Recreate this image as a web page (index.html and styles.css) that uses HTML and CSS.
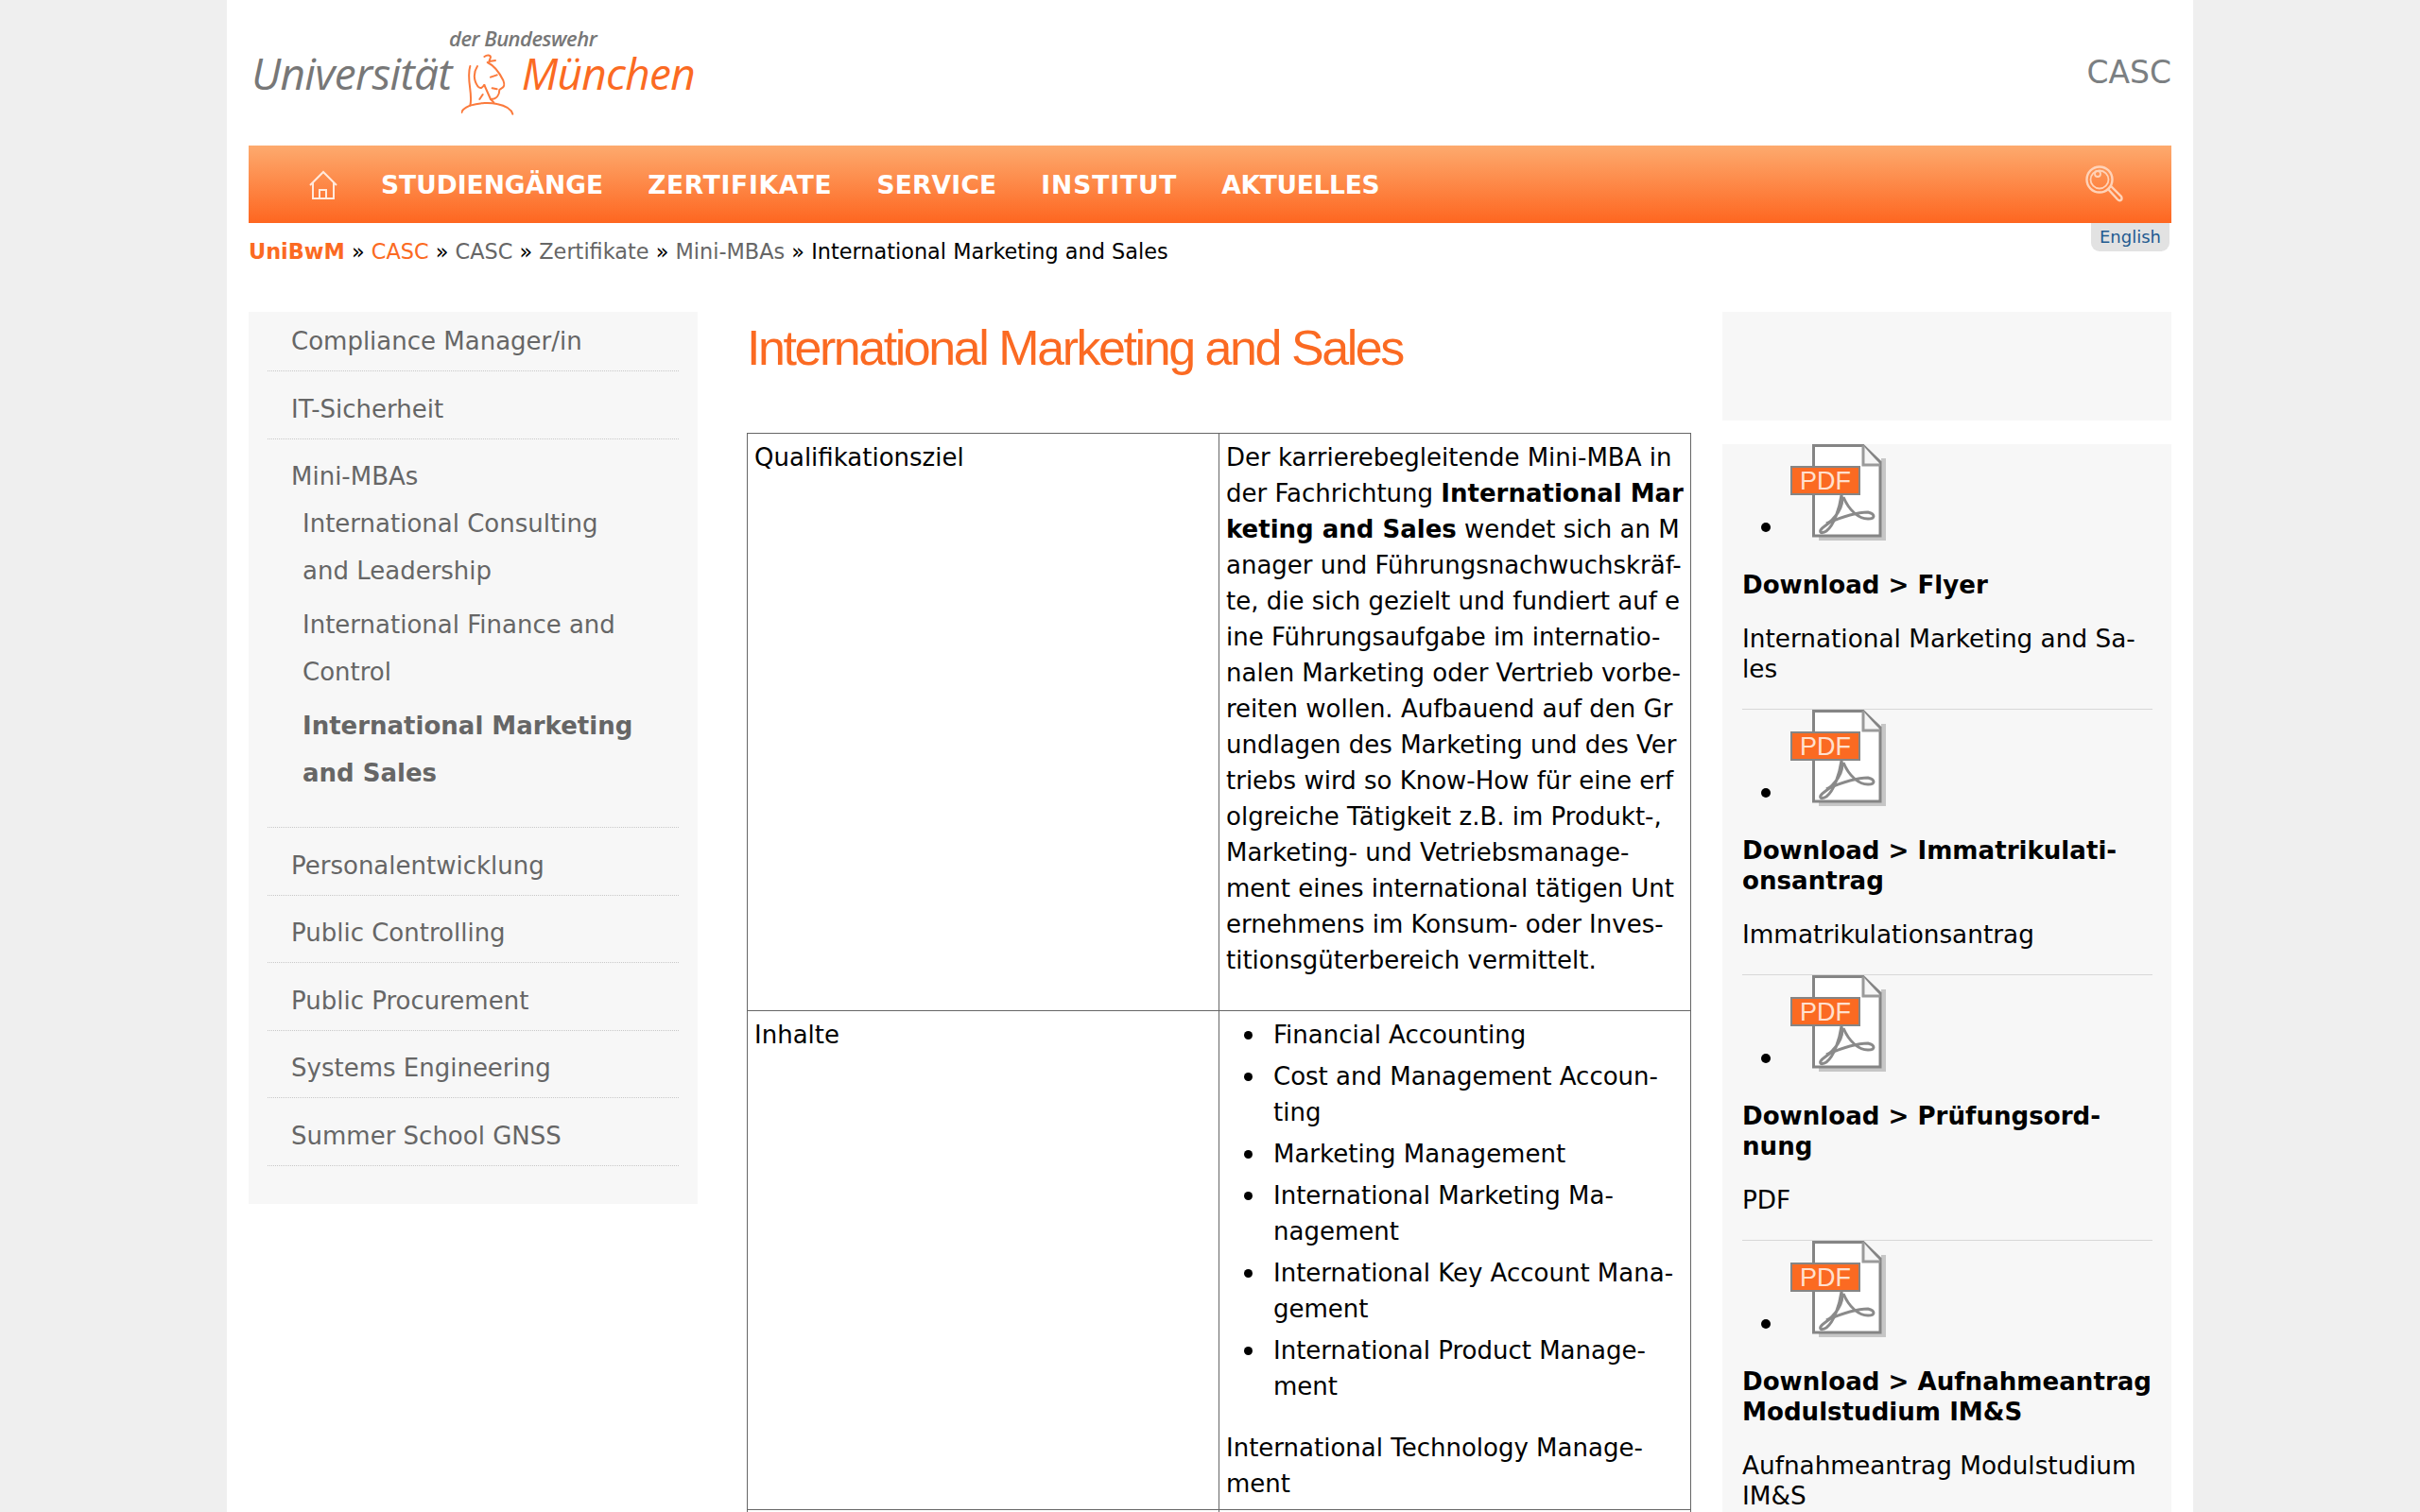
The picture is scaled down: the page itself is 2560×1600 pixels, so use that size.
FILE: index.html
```html
<!DOCTYPE html>
<html lang="de">
<head>
    <meta charset="UTF-8">
    <meta name="viewport" content="width=device-width, initial-scale=1.0">
    <title>International Marketing and Sales</title>
    <link rel="stylesheet" href="styles.css">
</head>
<body>
    <div class="page">
        <header class="header">
            <div class="logo">
                <div class="logo-top">der Bundeswehr</div>
                <div class="logo-main">
                    <span class="logo-uni">Universität</span>
                    <svg class="logo-head" viewBox="57 22 168 193" fill="none" stroke="#fb7a3c" stroke-width="6" stroke-linecap="round" stroke-linejoin="round">
                        <path d="M130 30C140 22 150 25 150 32L145 45L165 42"/>
                        <path d="M140 48C165 60 180 85 190 105C195 118 195 125 185 130L178 135C178 150 170 165 150 165"/>
                        <path d="M108 60C95 80 95 105 110 125C120 135 125 125 130 120"/>
                        <path d="M85 60C72 100 95 150 85 185C75 190 60 195 58 207"/>
                        <path d="M85 185C115 175 150 175 170 180C195 185 215 195 220 212"/>
                        <path d="M150 165L160 175M150 95L170 88M155 130L170 133M125 150L115 165M130 120L150 165"/>
                    </svg>
                    <span class="logo-city">München</span>
                </div>
            </div>
            <div class="site-name">CASC</div>
        </header>

        <nav class="navbar">
            <a class="nav-home" href="#">
                <svg viewBox="0 0 30 31" width="30" height="31" fill="none" stroke="#ffeadd" stroke-width="2">
                    <path d="M1 16 15 2l14 14M4 13v17h22V13M11 30v-9h7v9"/>
                </svg>
            </a>
            <a href="#">STUDIENGÄNGE</a>
            <a class="wide" href="#">ZERTIFIKATE</a>
            <a class="wide-s" href="#">SERVICE</a>
            <a class="wide-l" href="#">INSTITUT</a>
            <a class="tight" href="#">AKTUELLES</a>
            <svg class="nav-search" viewBox="0 0 40 40" width="40" height="40" fill="none" stroke="#ffd3b8" stroke-width="2.4">
                <circle cx="15" cy="15" r="13.5"/>
                <circle cx="15" cy="15" r="9.5" stroke-width="1.8"/>
                <circle cx="13" cy="9" r="3" stroke-width="1.8"/>
                <path d="M24 25 27 22 38 33Q39 35 38 36.500 36 38 34 36Z"/>
            </svg>
        </nav>

        <div class="crumb-row">
            <div class="crumbs">
                <a class="crumb-home" href="#">UniBwM</a> » <a class="crumb-casc" href="#">CASC</a> » <a href="#">CASC</a> » <a href="#">Zertifikate</a> » <a href="#">Mini-MBAs</a> » <span class="crumb-now">International Marketing and Sales</span>
            </div>
            <a class="lang" href="#">English</a>
        </div>

        <div class="columns">
            <aside class="sidenav">
                <ul class="menu">
                    <li><a href="#">Compliance Manager/in</a></li>
                    <li><a href="#">IT-Sicherheit</a></li>
                    <li>
                        <a href="#">Mini-MBAs</a>
                        <ul class="submenu">
                            <li><a href="#">International Consulting and Leadership</a></li>
                            <li><a href="#">International Finance and Control</a></li>
                            <li class="current"><a href="#">International Marketing and Sales</a></li>
                        </ul>
                    </li>
                    <li><a href="#">Personalentwicklung</a></li>
                    <li><a href="#">Public Controlling</a></li>
                    <li><a href="#">Public Procurement</a></li>
                    <li><a href="#">Systems Engineering</a></li>
                    <li><a href="#">Summer School GNSS</a></li>
                </ul>
            </aside>

            <main class="content">
                <h1>International Marketing and Sales</h1>
                <table class="info">
                    <tr class="row-goal">
                        <td>Qualifikationsziel</td>
                        <td>Der karrierebegleitende Mini-MBA in<br>der Fachrichtung <strong>International Mar<br>keting and Sales</strong> wendet sich an M<br>anager und Führungsnachwuchskräf-<br>te, die sich gezielt und fundiert auf e<br>ine Führungsaufgabe im internatio-<br>nalen Marketing oder Vertrieb vorbe-<br>reiten wollen. Aufbauend auf den Gr<br>undlagen des Marketing und des Ver<br>triebs wird so Know-How für eine erf<br>olgreiche Tätigkeit z.B. im Produkt-,<br>Marketing- und Vetriebsmanage-<br>ment eines international tätigen Unt<br>ernehmens im Konsum- oder Inves-<br>titionsgüterbereich vermittelt.</td>
                    </tr>
                    <tr>
                        <td>Inhalte</td>
                        <td>
                            <ul class="topics">
                                <li>Financial Accounting</li>
                                <li>Cost and Management Accoun-<br>ting</li>
                                <li>Marketing Management</li>
                                <li>International Marketing Ma-<br>nagement</li>
                                <li>International Key Account Mana-<br>gement</li>
                                <li>International Product Manage-<br>ment</li>
                            </ul>
                            <p class="topics-after">International Technology Manage-<br>ment</p>
                        </td>
                    </tr>
                    <tr class="row-next">
                        <td></td>
                        <td></td>
                    </tr>
                </table>
            </main>

            <aside class="sidebar">
                <div class="empty-box"></div>
                <ul class="downloads">
                    <li>
                        <div class="icon-row"><span class="bullet"></span><svg class="pdf" viewBox="0 0 102 102"><use href="#pdf-icon"/></svg></div>
                        <h4>Download &gt; Flyer</h4>
                        <p>International Marketing and Sa-<br>les</p>
                    </li>
                    <li>
                        <div class="icon-row"><span class="bullet"></span><svg class="pdf" viewBox="0 0 102 102"><use href="#pdf-icon"/></svg></div>
                        <h4>Download &gt; Immatrikulati-<br>onsantrag</h4>
                        <p>Immatrikulationsantrag</p>
                    </li>
                    <li>
                        <div class="icon-row"><span class="bullet"></span><svg class="pdf" viewBox="0 0 102 102"><use href="#pdf-icon"/></svg></div>
                        <h4>Download &gt; Prüfungsord-<br>nung</h4>
                        <p>PDF</p>
                    </li>
                    <li>
                        <div class="icon-row"><span class="bullet"></span><svg class="pdf" viewBox="0 0 102 102"><use href="#pdf-icon"/></svg></div>
                        <h4>Download &gt; Aufnahmeantrag<br>Modulstudium IM&amp;S</h4>
                        <p>Aufnahmeantrag Modulstudium<br>IM&amp;S</p>
                    </li>
                </ul>
            </aside>
        </div>
    </div>

    <svg class="sprite" width="0" height="0">
        <defs>
            <g id="pdf-icon">
                <path d="M96 15H101V102H30V98H96Z" fill="#c6c6c6"/>
                <path d="M24.500 1.500H77L95 19V97H24.500Z" fill="#fff" stroke="#858585" stroke-width="3"/>
                <path d="M77 1.500V22H95" fill="#f6f6f6" stroke="#9a9a9a" stroke-width="3"/>
                <rect x="1" y="24" width="72" height="29" fill="#fb6a22" stroke="#858585" stroke-width="2"/>
                <text x="37" y="48" text-anchor="middle" class="pdf-label">PDF</text>
                <path d="M54 54C58 66 46 80 36 87C29 92 31 96 38 92C46 86 52 68 54 54" fill="none" stroke="#8a8a8a" stroke-width="3"/>
                <path d="M38 84C52 78 68 72 82 72C90 74 90 79 82 79C72 79 62 70 56 56" fill="none" stroke="#8a8a8a" stroke-width="3"/>
            </g>
        </defs>
    </svg>
</body>
</html>
```

FILE: styles.css
```css
html {
    background-color: #efefef;
}

body {
    margin: 0;
    font-family: "DejaVu Sans", Verdana, sans-serif;
    font-size: 26px;
    color: #000;
}

a {
    text-decoration: none;
}

.sprite {
    position: absolute;
}

.page {
    width: 2034px;
    height: 1600px;
    margin: 0 auto;
    padding: 0 23px;
    background-color: #fff;
    overflow: hidden;
}

/* header */
.header {
    display: flex;
    justify-content: space-between;
    height: 154px;
}

.logo {
    width: 500px;
    padding-top: 29px;
    color: #777;
    font-family: "Open Sans", sans-serif;
    font-style: italic;
    white-space: nowrap;
}

.logo-top {
    padding-left: 212px;
    font-size: 22px;
    font-weight: 600;
    line-height: 22px;
    letter-spacing: -0.5px;
}

.logo-main {
    display: flex;
    align-items: flex-start;
    height: 70px;
    padding-left: 3px;
    font-size: 46px;
    font-weight: 500;
    line-height: 52px;
}

.logo-uni {
    letter-spacing: -0.7px;
}

.logo-head {
    width: 56px;
    height: 65px;
    margin: 6px 8px 0 10px;
}

.logo-city {
    color: #fb6a22;
    letter-spacing: -0.7px;
}

.site-name {
    margin-top: 56px;
    color: #7b7f82;
    font-size: 33px;
    line-height: 42px;
}

/* nav */
.navbar {
    display: flex;
    align-items: center;
    height: 82px;
    background: linear-gradient(#fdaa6e, #fe6620);
    padding: 0 51px 0 64px;
}

.navbar a {
    color: #fff;
    font-weight: bold;
    font-size: 26.5px;
    margin-right: 47px;
    white-space: nowrap;
}

.navbar .nav-home {
    display: flex;
    margin-right: 46px;
}

.navbar .wide {
    letter-spacing: 0.7px;
}

.navbar .wide-s {
    letter-spacing: 0.2px;
}

.navbar .wide-l {
    letter-spacing: 0.9px;
}

.navbar .tight {
    letter-spacing: -0.3px;
}

.nav-search {
    margin-left: auto;
}

/* breadcrumb */
.crumb-row {
    display: flex;
    justify-content: space-between;
    height: 94px;
}

.crumbs {
    padding-top: 15px;
    font-size: 22.4px;
    line-height: 30px;
}

.crumbs a {
    color: #666;
}

.crumbs .crumb-home {
    color: #fb6a22;
    font-weight: bold;
}

.crumbs .crumb-casc {
    color: #fb6a22;
}

.lang {
    align-self: flex-start;
    margin-right: 2px;
    padding: 0 9px;
    height: 30px;
    line-height: 29px;
    font-size: 18px;
    color: #1f5a90;
    background-color: #e2e2e2;
    border-radius: 0 0 9px 9px;
}

/* columns */
.columns {
    display: flex;
    align-items: flex-start;
}

.sidenav {
    width: 435px;
    margin-right: 52px;
    padding: 0 20px 40px;
    background-color: #f7f7f7;
}

.menu,
.submenu {
    list-style: none;
    margin: 0;
    padding: 0;
}

.menu > li {
    border-bottom: 1px dotted #c8c8c8;
    padding: 16.5px 0 8px 25px;
    line-height: 46px;
}

.menu > li:first-child {
    padding-top: 8px;
}

.menu a {
    color: #666;
}

.submenu {
    margin-top: 2px;
    padding: 0 40px 17px 12px;
}

.submenu li {
    line-height: 50px;
    margin-bottom: 7px;
}

.submenu .current a {
    font-weight: bold;
}

/* main */
.content {
    width: 999px;
    margin-right: 33px;
}

h1 {
    margin: 8px 0 0;
    height: 120px;
    font-family: "Liberation Sans", Arial, sans-serif;
    font-size: 52px;
    font-weight: normal;
    line-height: 60px;
    letter-spacing: -2.45px;
    color: #fb6a22;
}

.info {
    width: 999px;
    border-collapse: collapse;
    table-layout: fixed;
    line-height: 38px;
    white-space: nowrap;
}

.info td {
    border: 1px solid #666;
    padding: 6px 7px 8px;
    vertical-align: top;
}

.info .row-goal td {
    padding-bottom: 34px;
}

.info .row-next td {
    height: 300px;
}

.topics {
    list-style: none;
    margin: 0;
    padding-left: 50px;
}

.topics li {
    position: relative;
    margin-bottom: 6px;
}

.topics li::before {
    content: "";
    position: absolute;
    left: -31px;
    top: 15px;
    width: 9px;
    height: 9px;
    border-radius: 50%;
    background-color: #000;
}

.topics-after {
    margin: 27px 0 0;
}

/* right column */
.sidebar {
    width: 475px;
}

.empty-box {
    height: 115px;
    margin-bottom: 25px;
    background-color: #f7f7f7;
}

.downloads {
    list-style: none;
    margin: 0;
    padding: 0 20px 30px 21px;
    background-color: #f7f7f7;
    line-height: 32px;
    white-space: nowrap;
}

.downloads li {
    border-bottom: 1px solid #d8d8d8;
    height: 280px;
}

.downloads li:last-child {
    border-bottom: 0;
}

.icon-row {
    display: flex;
    align-items: flex-end;
}

.bullet {
    width: 10px;
    height: 10px;
    margin: 0 21px 9px 20px;
    border-radius: 50%;
    background-color: #000;
}

.pdf {
    width: 102px;
    height: 102px;
}

.pdf-label {
    font-family: "Liberation Sans", Arial, sans-serif;
    font-size: 27px;
    fill: #ffe0cf;
}

.downloads h4 {
    margin: 31px 0 25px;
    font-size: 26.1px;
    font-weight: bold;
}

.downloads p {
    margin: 0;
    font-size: 26.3px;
}
```
